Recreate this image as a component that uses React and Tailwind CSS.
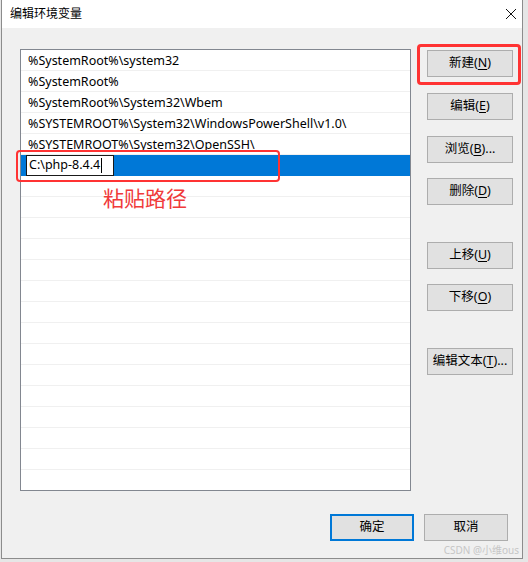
import React from 'react';

const paths = [
  '%SystemRoot%\\system32',
  '%SystemRoot%',
  '%SystemRoot%\\System32\\Wbem',
  '%SYSTEMROOT%\\System32\\WindowsPowerShell\\v1.0\\',
  '%SYSTEMROOT%\\System32\\OpenSSH\\',
];

const font = { fontFamily: '"Noto Sans", "Noto Sans CJK SC", sans-serif' };

// 按钮：带下划线的快捷键字母
function WinButton({ label, hotkey, tail = '', className = '' }) {
  return (
    <button
      className={`w-[86px] h-[27px] bg-[#e1e1e1] border border-[#adadad] text-[12.5px] text-black flex items-center justify-center leading-none ${className}`}
    >
      <span>
        {label}(<span className="underline underline-offset-2">{hotkey}</span>){tail}
      </span>
    </button>
  );
}

export default function App() {
  const rows = Array.from({ length: 21 });

  return (
    <div className="w-[528px] h-[562px] bg-[#e6e6e6] overflow-hidden" style={font}>
      <div className="ml-px w-[522px] h-[559px] border-x border-b border-[#8c8c8c] flex flex-col relative">
        {/* 标题栏 */}
        <div className="h-[28px] bg-white flex items-center justify-between pl-[8px] pr-[4px] shrink-0">
          <span className="text-[12px] text-black leading-none">编辑环境变量</span>
          <svg width="12" height="12" viewBox="0 0 12 12" className="mr-[1px]">
            <path d="M1 1 L11 11 M11 1 L1 11" stroke="#111" strokeWidth="1" fill="none" />
          </svg>
        </div>

        {/* 主体 */}
        <div className="flex-1 bg-[#f0f0f0] flex flex-col pl-[18px] pr-[9px] pt-[21px] pb-[17px]">
          <div className="flex gap-[16px]">
            {/* 列表 */}
            <div className="w-[391px] h-[442px] bg-white border border-[#828790] relative overflow-visible">
              <div className="flex flex-col h-full overflow-hidden">
                {rows.map((_, i) => {
                  const text = paths[i];
                  const selected = i === 5;
                  return (
                    <div
                      key={i}
                      className={`h-[21px] shrink-0 flex items-center text-[12.5px] text-black border-b ${
                        selected ? 'bg-[#0078d7] border-[#0078d7]' : 'border-[#f0f0f0]'
                      }`}
                    >
                      {selected ? (
                        <div className="ml-[5px] w-[88px] h-[21px] bg-white border border-[#1a1a1a] flex items-center pl-[2px] pt-[1px]">
                          <span>C:\php-8.4.4</span>
                          <span className="w-px h-[15px] bg-black ml-px" />
                        </div>
                      ) : (
                        <span className="pl-[7px] pt-[2px]">{text || ''}</span>
                      )}
                    </div>
                  );
                })}
              </div>
              {/* 标注 */}
              <div className="absolute left-[-5px] top-[100px] w-[264px] h-[32px] border-2 border-[#ff3333] rounded-[4px]" />
              <div className="absolute left-[82px] top-[138px] text-[21px] leading-none text-[#f03a3a]">粘贴路径</div>
            </div>

            {/* 按钮列 */}
            <div className="flex flex-col pt-[1px]">
              <div className="relative">
                <WinButton label="新建" hotkey="N" />
                <div className="absolute -left-[10px] -top-[6px] w-[104px] h-[41px] border-[3px] border-[#ff3333] rounded-[4px]" />
              </div>
              <WinButton label="编辑" hotkey="E" className="mt-[16px]" />
              <WinButton label="浏览" hotkey="B" tail="..." className="mt-[16px]" />
              <WinButton label="删除" hotkey="D" className="mt-[15px]" />
              <WinButton label="上移" hotkey="U" className="mt-[37px]" />
              <WinButton label="下移" hotkey="O" className="mt-[15px]" />
              <WinButton label="编辑文本" hotkey="T" tail="..." className="mt-[37px]" />
            </div>
          </div>

          {/* 底部按钮 */}
          <div className="mt-auto flex justify-end gap-[10px] pr-[5px]">
            <button className="w-[84px] h-[27px] bg-[#e1e1e1] border-2 border-[#0078d7] text-[12.5px] text-black">确定</button>
            <button className="w-[84px] h-[27px] bg-[#e1e1e1] border border-[#adadad] text-[12.5px] text-black">取消</button>
          </div>
        </div>

        <div className="absolute right-[3px] bottom-[3px] text-[10px] leading-none text-[#c6c6c6]">CSDN @小维ous</div>
      </div>
    </div>
  );
}
